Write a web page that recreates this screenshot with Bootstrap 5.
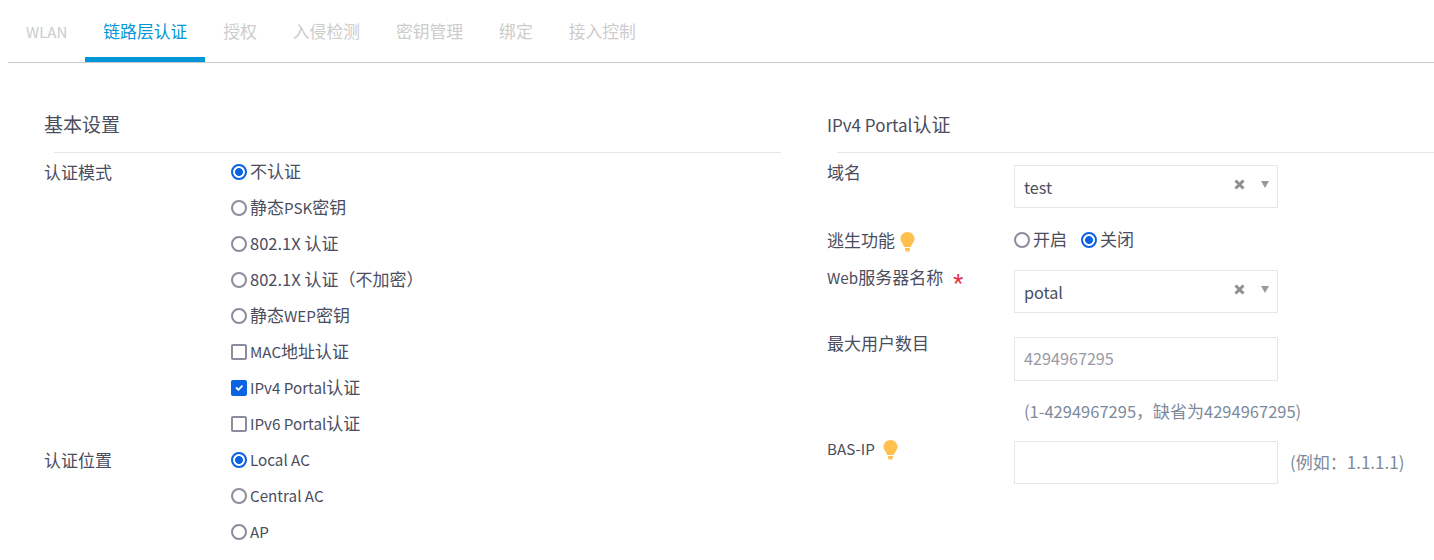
<!DOCTYPE html>
<html lang="zh">
<head>
<meta charset="utf-8">
<title>WLAN</title>
<link rel="stylesheet" href="https://cdn.jsdelivr.net/npm/bootstrap@5.3.0/dist/css/bootstrap.min.css">
<style>
html,body{height:560px;overflow:hidden;background:#fff}
body{font-family:"Noto Sans CJK SC",Roboto,sans-serif;font-size:17px;color:#4a4d5e;line-height:24px}
.lat{font-size:15.2px}
.num{font-size:16.5px}
.tabbar{margin:0 0 0 8px;height:63px;border-bottom:1px solid #c9c9c9;padding:0;flex-wrap:nowrap}
.tabbar .nav-link{height:62px;padding:19px 18px 0;color:#cccccc;font-size:16.8px;line-height:24px;border-bottom:5px solid transparent;border-radius:0}
.tabbar .nav-link .lat{font-size:15px}
.tabbar .nav-link.active{color:#0096d6;border-bottom-color:#0096d6}
.paneleft{width:781px;padding:48px 0 0 44px;flex:none}
.paneright{flex:1;padding:48px 0 0 46px;min-width:0}
.sect{font-size:19px;line-height:26px;height:41px;padding-bottom:0;margin:0;font-weight:400;color:#4a4d5e}
.sect .lat{font-size:17px}
.sectline{border-top:1px solid #e6e6e6;margin:0 0 0 10px;height:1px}
.optlist{margin-top:1px}
.lab{flex:none;width:187px}
.labup{margin-top:-5px}
.labupmore{margin-top:-6px}
.optrow{height:36px;display:flex;align-items:center;white-space:pre}
.optrow > span{padding-bottom:2px}
.optrow .form-check-input{margin:0 3px 0 0;width:16px;height:16px;flex:none;background-color:#fff;border:2px solid #8c8c9c}
.optrow .form-check-input[type=radio]:checked{background:radial-gradient(circle,#0b62e3 0 3.6px,#fff 4.2px);border-color:#0b62e3}
.optrow .form-check-input[type=checkbox]{border-radius:2px}
.optrow .form-check-input[type=checkbox]:checked{background-color:#0b62e3;border-color:#0b62e3}
.optrow .form-check-input:focus{box-shadow:none}
.shortrow{height:24px}
.optrow .radiotwo{margin-left:14px}
.ctrl{width:264px;height:43px;border:1px solid #e6e6e6;border-radius:0;padding:0 9px;color:#4a4d5e;font-size:16.2px;box-shadow:none}
.ctrl::placeholder{color:#9a9aa5;opacity:1}
.tallctrl{height:44px;padding-bottom:2px}
.selbox .val{flex:1;padding-top:1px}
.selbox svg{display:block;margin-top:-5px}
.selbox .clearx{margin-right:16px;margin-left:1px}
.selbox .caretd{margin-right:-1px}
.frow{display:flex;align-items:flex-start}
.gap12{margin-top:12px}
.gap20{margin-top:20px;height:24px}
.gap18{margin-top:18px}
.gap24{margin-top:24px}
.hinttxt{color:#7d8a9c}
.hintbelow{padding-left:10px}
.hintside{margin-left:12px;margin-top:9px}
.req{color:#e8304a;margin-left:10px;font-family:Roboto,sans-serif;font-size:23px;vertical-align:-7px;line-height:1}
.bulb{display:inline-block;vertical-align:-5px;margin-left:5px}
</style>
</head>
<body>
<ul class="nav tabbar">
  <li class="nav-item"><a class="nav-link" href="#"><span class="lat">WLAN</span></a></li>
  <li class="nav-item"><a class="nav-link active" href="#">链路层认证</a></li>
  <li class="nav-item"><a class="nav-link" href="#">授权</a></li>
  <li class="nav-item"><a class="nav-link" href="#">入侵检测</a></li>
  <li class="nav-item"><a class="nav-link" href="#">密钥管理</a></li>
  <li class="nav-item"><a class="nav-link" href="#">绑定</a></li>
  <li class="nav-item"><a class="nav-link" href="#">接入控制</a></li>
</ul>
<div class="d-flex">
  <div class="paneleft">
    <h5 class="sect">基本设置</h5>
    <div class="sectline"></div>
    <div class="optlist">
    <div class="d-flex">
      <div class="lab optrow">认证模式</div>
      <div>
        <div class="optrow"><input class="form-check-input" type="radio" name="m" checked><span>不认证</span></div>
        <div class="optrow"><input class="form-check-input" type="radio" name="m"><span>静态<span class="lat">PSK</span>密钥</span></div>
        <div class="optrow"><input class="form-check-input" type="radio" name="m"><span><span class="num">802.1X</span> 认证</span></div>
        <div class="optrow"><input class="form-check-input" type="radio" name="m"><span><span class="num">802.1X</span> 认证（不加密）</span></div>
        <div class="optrow"><input class="form-check-input" type="radio" name="m"><span>静态<span class="lat">WEP</span>密钥</span></div>
        <div class="optrow"><input class="form-check-input" type="checkbox"><span><span class="lat">MAC</span>地址认证</span></div>
        <div class="optrow"><input class="form-check-input" type="checkbox" checked><span><span class="lat">IPv4 Portal</span>认证</span></div>
        <div class="optrow"><input class="form-check-input" type="checkbox"><span><span class="lat">IPv6 Portal</span>认证</span></div>
      </div>
    </div>
    <div class="d-flex">
      <div class="lab optrow">认证位置</div>
      <div>
        <div class="optrow"><input class="form-check-input" type="radio" name="p" checked><span class="lat">Local AC</span></div>
        <div class="optrow"><input class="form-check-input" type="radio" name="p"><span class="lat">Central AC</span></div>
        <div class="optrow"><input class="form-check-input" type="radio" name="p"><span class="lat">AP</span></div>
      </div>
    </div>
    </div>
  </div>
  <div class="paneright">
    <h5 class="sect"><span class="lat">IPv4 Portal</span>认证</h5>
    <div class="sectline"></div>
    <div class="frow gap12">
      <div class="lab labup">域名</div>
      <div class="ctrl selbox d-flex align-items-center">
        <span class="val">test</span>
        <svg class="clearx" width="11" height="11" viewBox="0 0 11 11"><path d="M1.5 1.500l8 8M9.500 1.500l-8 8" stroke="#8f8f8f" stroke-width="3"/></svg>
        <svg class="caretd" width="8" height="7" viewBox="0 0 8 7"><path d="M0 0h8L4 7z" fill="#9a9a9a"/></svg>
      </div>
    </div>
    <div class="frow gap20">
      <div class="lab">逃生功能<svg class="bulb" width="15" height="20" viewBox="0 0 15 20"><path d="M7.500 0C3.400 0 .5 3 .5 6.800c0 3.200 2.600 4.800 3.600 8.200h6.800c1-3.400 3.600-5 3.600-8.200C14.500 3 11.600 0 7.500 0z" fill="#ffc04d"/><path d="M4.800 16h5.400l-.8 3.400H5.600z" fill="#ffc04d"/></svg></div>
      <div class="optrow shortrow"><input class="form-check-input" type="radio" name="e"><span>开启</span><input class="form-check-input radiotwo" type="radio" name="e" checked><span>关闭</span></div>
    </div>
    <div class="frow gap18">
      <div class="lab labup"><span class="lat">Web</span>服务器名称<span class="req">*</span></div>
      <div class="ctrl selbox d-flex align-items-center">
        <span class="val">potal</span>
        <svg class="clearx" width="11" height="11" viewBox="0 0 11 11"><path d="M1.5 1.500l8 8M9.500 1.500l-8 8" stroke="#8f8f8f" stroke-width="3"/></svg>
        <svg class="caretd" width="8" height="7" viewBox="0 0 8 7"><path d="M0 0h8L4 7z" fill="#9a9a9a"/></svg>
      </div>
    </div>
    <div class="frow gap24">
      <div class="lab labupmore">最大用户数目</div>
      <input class="form-control ctrl tallctrl" placeholder="4294967295">
    </div>
    <div class="frow gap18">
      <div class="lab"></div>
      <div class="hinttxt hintbelow"><span class="num">(1-4294967295</span>，缺省为<span class="num">4294967295)</span></div>
    </div>
    <div class="frow gap18">
      <div class="lab labup"><span class="lat">BAS-IP</span><svg class="bulb ms-2" width="15" height="20" viewBox="0 0 15 20"><path d="M7.500 0C3.400 0 .5 3 .5 6.800c0 3.200 2.600 4.800 3.600 8.200h6.800c1-3.400 3.600-5 3.600-8.200C14.500 3 11.600 0 7.500 0z" fill="#ffc04d"/><path d="M4.800 16h5.400l-.8 3.400H5.600z" fill="#ffc04d"/></svg></div>
      <input class="form-control ctrl" type="text">
      <span class="hinttxt hintside">(例如：1.1.1.1)</span>
    </div>
  </div>
</div>
<script src="https://cdn.jsdelivr.net/npm/bootstrap@5.3.0/dist/js/bootstrap.bundle.min.js"></script>
</body>
</html>
